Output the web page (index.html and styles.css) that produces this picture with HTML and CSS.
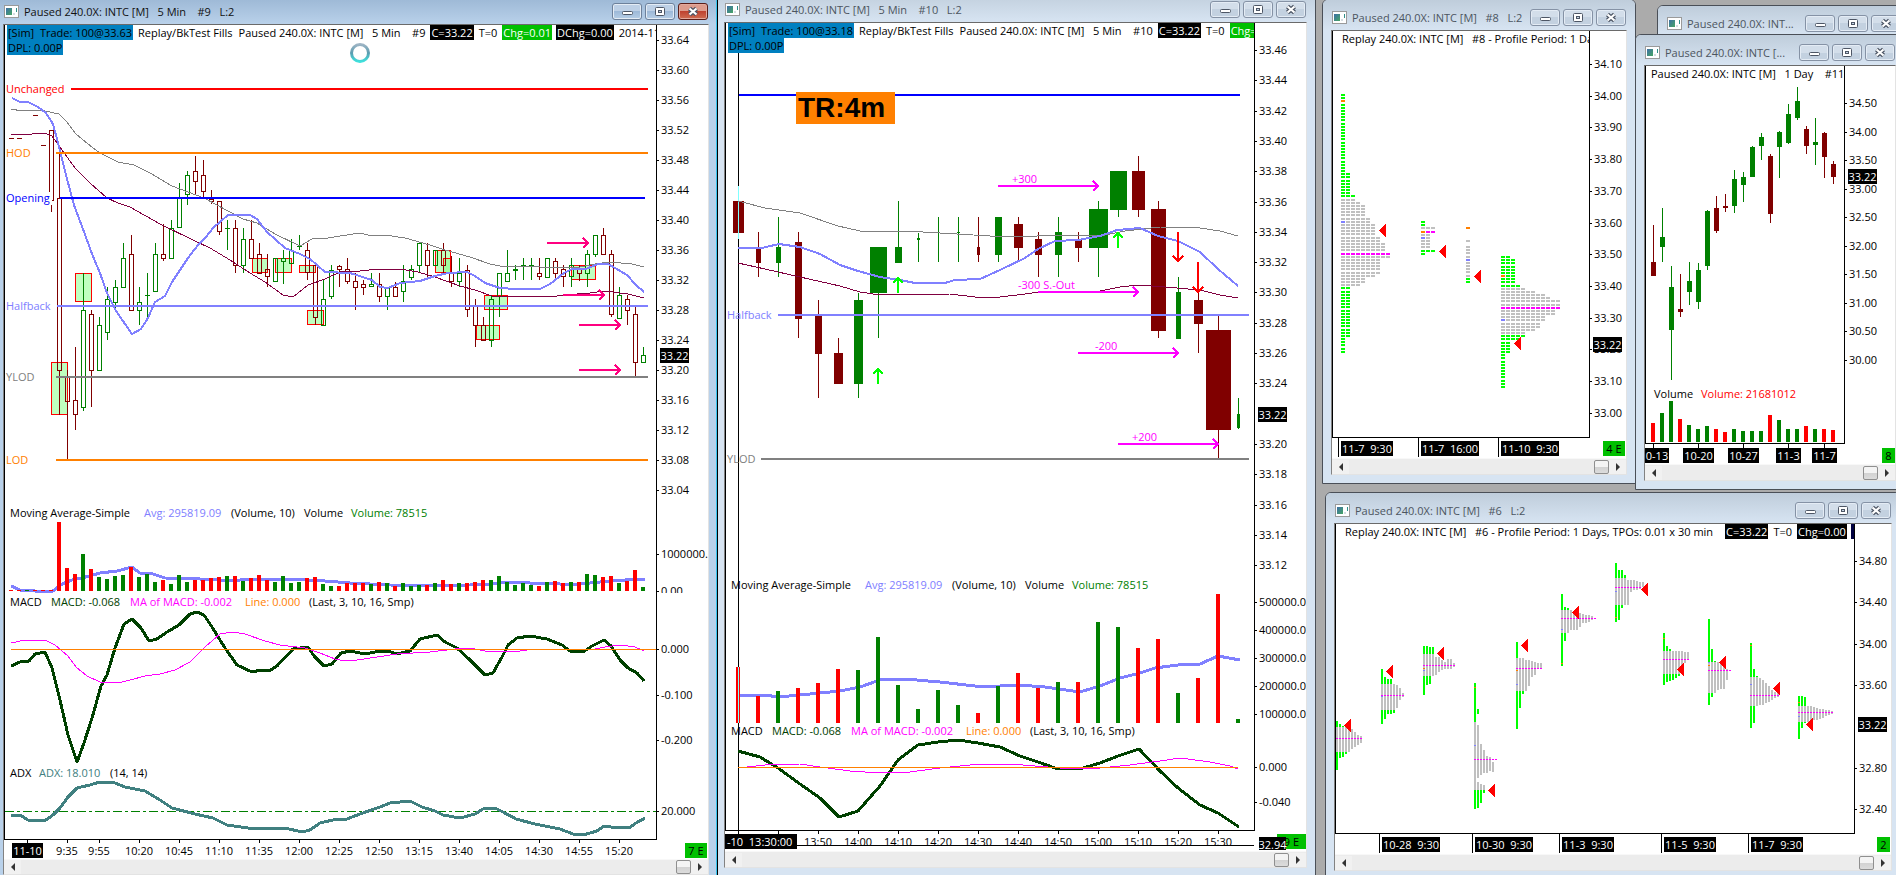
FILE: index.html
```html
<!DOCTYPE html>
<html lang="en">
<head>
<meta charset="utf-8">
<title>INTC replay workspace</title>
<link rel="stylesheet" href="styles.css">
</head>
<body>
<svg class="defs" aria-hidden="true">
  <defs>
    <linearGradient id="ring" x1="0" y1="0" x2="0" y2="1"><stop offset="0" stop-color="#9db4c4"/><stop offset=".5" stop-color="#5a9cb0"/><stop offset="1" stop-color="#3fe0dc"/></linearGradient>
    <linearGradient id="pane" x1="0" y1="0" x2="1" y2="1"><stop offset="0" stop-color="#3d6fa8"/><stop offset="1" stop-color="#46a563"/></linearGradient>
    <symbol id="app" viewBox="0 0 15 13"><rect x=".5" y=".5" width="14" height="12" fill="#fff" stroke="#9a9a9a"/><rect x="2" y="3" width="6" height="7" fill="url(#pane)"/><rect x="9" y="8" width="2" height="2" fill="#d5dde2"/><rect x="12" y="3" width="1" height="4" fill="#2f8f8a"/></symbol>
    <symbol id="min" viewBox="0 0 30 17"><rect x="10.500" y="8.500" width="10" height="3" rx="1" fill="#fff" stroke="#4d5665"/></symbol>
    <symbol id="max" viewBox="0 0 30 17"><rect x="10.500" y="4.500" width="9" height="8" rx="1" fill="#fff" stroke="#4d5665"/><rect x="13.500" y="7.500" width="3" height="2" fill="#c5d3e4" stroke="#4d5665"/></symbol>
    <symbol id="close" viewBox="0 0 30 17"><path d="M11.500 5.500L18.500 11.500M18.500 5.500L11.500 11.500" stroke="#4d5665" stroke-width="4.500"/><path d="M11.500 5.500L18.500 11.500M18.500 5.500L11.500 11.500" stroke="#fff" stroke-width="2.200"/></symbol>
  </defs>
</svg>
<main class="desktop">

  <section class="window w12">
    <header class="titlebar"><svg class="icon"><use href="#app"/></svg><h2>Paused 240.0X: INT...</h2><div class="controls"><button aria-label="Minimize"><svg><use href="#min"/></svg></button><button aria-label="Maximize"><svg><use href="#max"/></svg></button><button aria-label="Close"><svg><use href="#close"/></svg></button></div></header>
    <div class="content"></div>
  </section>

  <section class="window w8">
    <header class="titlebar"><svg class="icon"><use href="#app"/></svg><h2>Paused 240.0X: INTC [M]   #8   L:2</h2><div class="controls"><button aria-label="Minimize"><svg><use href="#min"/></svg></button><button aria-label="Maximize"><svg><use href="#max"/></svg></button><button aria-label="Close"><svg><use href="#close"/></svg></button></div></header>
    <div class="content">
      <div class="chart"><svg id="c8"></svg><div class="info inset-m"><p><span>Replay 240.0X: INTC [M]   #8 - Profile Period: 1 Days</span></p></div></div>
      <div class="scrollbar"><button class="arrow left" aria-label="Scroll left"></button><i class="thumb"></i><button class="arrow right" aria-label="Scroll right"></button></div>
    </div>
  </section>

  <section class="window w11">
    <header class="titlebar"><svg class="icon"><use href="#app"/></svg><h2>Paused 240.0X: INTC [...</h2><div class="controls"><button aria-label="Minimize"><svg><use href="#min"/></svg></button><button aria-label="Maximize"><svg><use href="#max"/></svg></button><button aria-label="Close"><svg><use href="#close"/></svg></button></div></header>
    <div class="content">
      <div class="chart"><svg id="c11"></svg><div class="info inset-s"><p><span>Paused 240.0X: INTC [M]   1 Day    #11</span></p></div></div>
      <div class="scrollbar"><button class="arrow left" aria-label="Scroll left"></button><i class="thumb"></i><button class="arrow right" aria-label="Scroll right"></button></div>
    </div>
  </section>

  <section class="window w6">
    <header class="titlebar"><svg class="icon"><use href="#app"/></svg><h2>Paused 240.0X: INTC [M]   #6   L:2</h2><div class="controls"><button aria-label="Minimize"><svg><use href="#min"/></svg></button><button aria-label="Maximize"><svg><use href="#max"/></svg></button><button aria-label="Close"><svg><use href="#close"/></svg></button></div></header>
    <div class="content">
      <div class="chart"><svg id="c6"></svg><div class="info inset-m"><p><span class="lead">Replay 240.0X: INTC [M]   #6 - Profile Period: 1 Days, TPOs: 0.01 x 30 min</span><b class="last">C=33.22</b><span>T=0</span><b class="last">Chg=0.00</b><b class="navy"></b></p></div></div>
      <div class="scrollbar"><button class="arrow left" aria-label="Scroll left"></button><i class="thumb"></i><button class="arrow right" aria-label="Scroll right"></button></div>
    </div>
  </section>

  <section class="window w10">
    <header class="titlebar"><svg class="icon"><use href="#app"/></svg><h2>Paused 240.0X: INTC [M]   5 Min    #10   L:2</h2><div class="controls"><button aria-label="Minimize"><svg><use href="#min"/></svg></button><button aria-label="Maximize"><svg><use href="#max"/></svg></button><button aria-label="Close"><svg><use href="#close"/></svg></button></div></header>
    <div class="content">
      <div class="chart"><svg id="c10"></svg><div class="info"><p><b class="sim">[Sim]  Trade: 100@33.18</b><span>Replay/BkTest Fills</span><span>Paused 240.0X: INTC [M]   5 Min    #10</span><b class="last">C=33.22</b><span>T=0</span><b class="up">Chg=0.01</b></p><p><b class="sim">DPL: 0.00P</b></p></div></div>
      <div class="scrollbar"><button class="arrow left" aria-label="Scroll left"></button><i class="thumb"></i><button class="arrow right" aria-label="Scroll right"></button></div>
    </div>
  </section>

  <section class="window w9 active">
    <header class="titlebar"><svg class="icon"><use href="#app"/></svg><h2>Paused 240.0X: INTC [M]   5 Min    #9   L:2</h2><div class="controls"><button aria-label="Minimize"><svg><use href="#min"/></svg></button><button aria-label="Maximize"><svg><use href="#max"/></svg></button><button class="danger" aria-label="Close"><svg><use href="#close"/></svg></button></div></header>
    <div class="content">
      <div class="chart"><svg id="c9"></svg><div class="info"><p><b class="sim">[Sim]  Trade: 100@33.63</b><span>Replay/BkTest Fills</span><span>Paused 240.0X: INTC [M]   5 Min    #9</span><b class="last">C=33.22</b><span>T=0</span><b class="up">Chg=0.01</b><b class="last">DChg=0.00</b><span>2014-11-10</span></p><p><b class="sim">DPL: 0.00P</b></p></div></div>
      <div class="scrollbar"><button class="arrow left" aria-label="Scroll left"></button><i class="thumb"></i><button class="arrow right" aria-label="Scroll right"></button></div>
    </div>
  </section>

</main>
<script src="charts.js"></script>
</body>
</html>
```

FILE: styles.css
```css
* { box-sizing: border-box; }
body { margin: 0; font-family: "Open Sans", "Noto Sans", sans-serif; font-size: 11px; color: #000; }
.defs { position: absolute; width: 0; height: 0; }
.desktop { position: relative; height: 100vh; overflow: hidden; background: #ababab; }

.window { position: absolute; display: flex; flex-direction: column; padding: 0 8px 8px; border: 1px solid #4a4f57; border-radius: 6px 6px 0 0; background: #d7e4f2; }
.w9 { left: -6px; top: -7px; bottom: -9px; width: 724px; }
.w10 { left: 715px; top: -9px; bottom: -2px; width: 601px; }
.w8 { left: 1322px; top: -1px; width: 314px; height: 485px; }
.w11 { left: 1635px; top: 34px; width: 270px; height: 456px; }
.w12 { left: 1657px; top: 5px; width: 254px; height: 300px; }
.w6 { left: 1325px; top: 492px; width: 576px; height: 388px; }
.window.active { background: #b9d1ea; border-color: #000; box-shadow: inset -1px 0 #36c4ee; }

.titlebar { display: flex; align-items: center; gap: 5px; height: 30px; flex: none; padding-top: 5px; margin: 0 -8px; padding-left: 9px; padding-right: 9px; border-radius: 5px 5px 0 0; background: linear-gradient(#bfcddb, #d7e4f2); }
.active .titlebar { background: linear-gradient(#98b4d2, #b9d1ea); margin-right: -7px; padding-right: 8px; }
.titlebar h2 { flex: 1; margin: 0; font-size: 11px; font-weight: 400; white-space: pre; overflow: hidden; color: #4c5560; }
.active h2 { color: #111; }
.icon { width: 15px; height: 13px; flex: none; }
.controls { display: flex; gap: 3px; flex: none; }
.controls button { width: 30px; height: 17px; padding: 0; border: 1px solid #8592a5; border-radius: 3px; background: linear-gradient(#d3deea 50%, #c3d1e0 50%); box-shadow: inset 0 0 0 1px #e4ecf5; }
.controls svg { display: block; width: 30px; height: 17px; margin: -1px; }
.active .controls button { background: linear-gradient(#bdd0e6 50%, #9db9d8 50%, #b6cee6); border-color: #6d819b; }
.active .controls .danger { background: linear-gradient(#dd9c8d 50%, #bf4330 50%, #cf6d52); border-color: #5a1d18; box-shadow: inset 0 0 0 1px #e3a99c; }

.content { flex: 1; min-height: 0; display: flex; flex-direction: column; border: 1px solid #e3e3e3; border-top-color: #6a6a6a; border-left-color: #828282; background: #fff; }
.chart { position: relative; flex: 1; min-height: 0; overflow: hidden; }
.chart > svg { display: block; width: 100%; height: 100%; }
.chart text { font-family: inherit; font-size: 11px; white-space: pre; }

.info { position: absolute; top: 0; left: 3px; right: 52px; overflow: hidden; }
.info.inset-m { left: 9px; right: 37px; }
.info.inset-s { left: 5px; right: 51px; }
.info p { display: flex; gap: 4px; margin: 0; height: 15px; line-height: 15px; white-space: pre; }
.info span, .info b { flex: none; padding: 0 1px; font-weight: 400; }
.info .lead { padding-right: 8px; }
.info .sim { background: #0080c0; }
.info .last { background: #000; color: #fff; }
.info .up { background: #00c000; color: #fff; }
.info .navy { background: #000040; width: 9px; }

.scrollbar { display: flex; align-items: center; flex: none; height: 16px; padding: 1px 0; background: #ececec; border-top: 1px solid #f8f8f8; }
.w9 .scrollbar { height: 15px; }
.thumb { width: 15px; height: 14px; margin-left: auto; border: 1px solid #8f8f8f; border-radius: 2px; background: linear-gradient(#f4f4f4 50%, #d2d2d2 50%, #dcdcdc); }
.arrow { width: 17px; height: 14px; padding: 0; border: 0; background: #f1f1f1; display: flex; align-items: center; justify-content: center; }
.arrow::before { content: ""; border: 4px solid transparent; }
.arrow.left::before { border-right-color: #333; border-left-width: 0; }
.arrow.right::before { border-left-color: #333; border-right-width: 0; }
```

FILE: charts.js
```js
const NS = 'http://www.w3.org/2000/svg';
const RED = '#800000', GREEN = '#008000', BLUE = '#8080ff', GRAY = '#808080', PLUM = '#800040';
const ORANGE = '#ff8000', MAGENTA = '#ff00ff', FOREST = '#004000', TEAL = '#408080', LIME = '#00ff00';
const hue = { r: RED, g: GREEN };
const volHue = { r: '#ff0000', g: GREEN };

// Drawing helpers bound to one chart; (ox, oy) is the chart's origin on the workspace.
function chart(id, ox, oy) {
  const g = document.createElementNS(NS, 'g');
  g.setAttribute('transform', `translate(${-ox} ${-oy})`);
  document.getElementById(id).append(g);
  const add = (tag, attrs) => {
    const el = document.createElementNS(NS, tag);
    for (const k in attrs) el.setAttribute(k, attrs[k]);
    g.append(el);
    return el;
  };
  const crisp = { 'shape-rendering': 'crispEdges' };
  const c = {
    add,
    rect: (x, y, w, h, fill) => add('rect', { x, y, width: w, height: h, fill, ...crisp }),
    h: (x1, x2, y, color, w = 1) => c.rect(x1, y, x2 - x1, w, color),
    v: (x, y1, y2, color, w = 1) => c.rect(x, y1, w, y2 - y1, color),
    poly: (points, stroke, w = 1) => add('polyline', { points, stroke, 'stroke-width': w, fill: 'none', 'stroke-linejoin': 'round', ...crisp }),
    text: (x, y, s, fill = '#000', anchor = 'start') => { add('text', { x, y, fill, 'text-anchor': anchor }).textContent = s; },
    tag: (x, y, w, s, bg = '#000', fg = '#fff', h = 15) => { c.rect(x, y, w, h, bg); c.text(x + w / 2, y + 12, s, fg, 'middle'); },
    axis: (x, labels) => labels.forEach(([y, s]) => { c.h(x, x + 3, y, '#000'); c.text(x + 5, y + 4, s); }),
    arrow: (x1, x2, y, color) => add('path', { d: `M${x1} ${y}H${x2}M${x2 - 5} ${y - 5}L${x2} ${y}L${x2 - 5} ${y + 5}`, stroke: color, 'stroke-width': 2, fill: 'none', ...crisp }),
    vArrow: (x, tail, tip, color) => { const d = tip < tail ? 5 : -5; add('path', { d: `M${x} ${tail}V${tip}M${x - 5} ${tip + d}L${x} ${tip}L${x + 5} ${tip + d}`, stroke: color, 'stroke-width': 2, fill: 'none', ...crisp }); },
    flag: (x, y) => add('path', { d: `M${x} ${y + .5}L${x + 7} ${y - 6.5}V${y + 7.5}Z`, fill: '#ff0000', ...crisp })
  };
  return c;
}

const parse = s => s.trim().split(/\s+/).map(t => [t[0], ...t.slice(1).split(',').map(Number)]);

/* #9, five-minute chart */
{
  const c = chart('c9', 4, 25);
  c.v(4, 25, 840, '#000');
  [[51, 362, 17, 53], [75, 273, 17, 29], [252, 258, 16, 15], [275, 258, 17, 15], [299, 265, 17, 8], [307, 310, 17, 15],
   [435, 250, 16, 23], [443, 258, 8, 15], [571, 265, 25, 15], [484, 295, 24, 15], [476, 325, 24, 15]].forEach(([x, y, w, h]) =>
    c.add('rect', { x: x + .5, y: y + .5, width: w - 1, height: h - 1, fill: 'rgba(128,255,128,.5)', stroke: '#ff0000', 'shape-rendering': 'crispEdges' }));

  // side + high, body top, body bottom, low
  const bars = parse(`r130,130,200,212 r153,198,370,415 r370,377,401,459 r347,400,414,430 g273,310,407,411 r310,314,370,407 g317,325,370,370
    g287,299,332,340 g280,287,302,308 g243,258,287,287 r235,254,310,310 g287,302,310,325 g273,295,295,317 g243,254,291,291
    r224,254,258,261 g220,228,258,258 g183,198,227,227 g171,175,194,205 r156,171,181,195 r160,175,191,197 r190,199,201,204
    r201,201,231,235 g220,228,228,250 r220,228,265,273 g228,239,265,273 r220,239,258,258 r243,254,273,273 r254,269,276,287
    g258,258,281,281 g250,258,261,284 g239,250,263,263 g235,246,246,250 r243,250,272,280 r265,265,317,325 g280,299,325,325
    g265,270,296,299 r265,266,269,287 r258,269,281,284 r273,281,287,310 r280,284,287,295 g273,284,286,286 r273,284,296,302
    g288,288,296,310 r282,287,296,296 g265,281,291,302 g265,269,277,280 g243,243,265,273 r243,250,265,280 g250,250,265,265
    r243,250,265,273 r256,273,281,287 g258,273,281,287 r265,270,309,317 r299,306,325,347 r317,325,340,340 g295,299,340,347
    g273,273,296,317 g250,273,281,281 g265,269,270,280 g258,265,265,280 g258,265,265,280 r258,273,276,280 g258,258,277,277
    r258,261,273,281 r265,269,276,287 g258,265,276,287 r265,269,273,281 g250,254,273,287 g235,235,254,257 r228,235,254,251
    r250,254,314,317 g287,295,318,318 r295,299,310,325 r307,314,362,376 g347,355,362,362`);
  bars.forEach(([k, hi, top, bot, lo], n) => {
    const x = 51 + n * 8, col = hue[k];
    c.v(x, hi, top, col);
    if (lo > bot) c.v(x, bot, lo, col);
    if (bot - top < 2) c.h(x - 2, x + 3, top, col, bot - top + 1);
    else c.add('rect', { x: x - 1.5, y: top + .5, width: 4, height: bot - top, fill: 'none', stroke: col, 'shape-rendering': 'crispEdges' });
  });
  [[9, 138], [17, 138], [33, 115], [41, 145]].forEach(([x, y]) => c.h(x, x + 5, y, RED));

  c.poly('11,109 22,111 32,110 45,111 59,114 66,121 76,134 88,144 100,153 118,162 134,165 150,173 172,186 188,192 204,198 228,211 243,219 257,223 275,234 300,246 312,239 328,238 340,236 360,233 372,236 385,235 405,238 430,245 445,250 470,257 490,264 500,266 530,266 540,267 580,267 595,264 610,262 632,264 644,267', GRAY);
  c.poly('11,134 20,135 45,133 52,136 62,150 75,168 90,183 107,198 118,203 130,207 160,224 195,241 210,248 230,260 250,273 265,282 283,295 293,297 308,285 325,279 340,272 360,271 378,269 400,269 418,272 435,277 460,286 475,290 492,296 520,296 550,297 565,295 590,293 605,291 628,294 636,296 644,298', PLUM);
  c.poly('12,98 20,102 28,102 38,107 46,113 53,124 58,143 66,175 74,205 83,229 92,254 100,273 107,293 116,311 132,334 141,329 148,318 155,302 165,296 172,282 188,258 198,245 206,237 213,228 228,215 250,215 257,219 267,232 285,248 300,254 310,259 325,272 350,273 372,280 380,287 388,288 400,283 420,281 435,276 448,273 467,272 475,276 485,283 500,288 515,289 540,289 550,284 564,273 572,269 586,269 598,264 608,264 615,268 627,275 636,285 644,292', BLUE, 2);

  c.rect(5, 192, 47, 13, '#fff');
  [[89, 71, '#ff0000', 'Unchanged', 648], [153, 56, ORANGE, 'HOD', 648], [198, 60, '#0000ff', 'Opening', 645], [306, 57, BLUE, 'Halfback', 648], [377, 56, GRAY, 'YLOD', 648], [460, 56, ORANGE, 'LOD', 648]].forEach(([y, x, col, s, end]) => {
    c.h(x, end, y - 1, col, 2);
    c.text(6, y + 4, s, col);
  });
  [[547, 588, 243], [563, 604, 295], [579, 620, 325], [579, 620, 370]].forEach(([a, b, y]) => c.arrow(a, b, y, '#ff0080'));

  // volume study
  c.poly('11,586 20,590 35,591 53,591 60,585 72,580 90,576 100,573 117,571 132,567 140,573 150,573 165,578 200,579 220,580 240,580 256,579 290,579 305,580 325,581 350,583 390,585 430,586 470,585 490,584 508,582 530,583 560,584 580,584 600,582 625,580 637,579 645,580', BLUE, 3);
  const vols = 'r69 r23 r17 g37 r22 g14 g12 g15 g16 r24 g14 g17 g9 r11 g7 g16 g9 r11 r11 r13 r14 g15 r15 g10 r13 r16 r11 g9 g15 g8 g9 r13 r14 g7 g5 r5 r8 r8 r8 g7 r9 g8 r5 g8 g5 g6 r6 g8 r11 r7 g8 r8 r9 r11 g11 g15 g9 g6 g8 g6 r5 g9 r10 r8 g9 r9 g17 g16 r14 r15 g8 r10 r21 g4';
  parse(vols).forEach(([k, h], i) => c.rect(57 + i * 8, 591 - h, 4, h, volHue[k]));
  [9, 17, 25, 33, 41, 49].forEach((x, i) => c.h(x, x + 4, 590, i === 2 ? GREEN : '#ff0000'));

  // MACD study
  c.poly('11,666 20,662 29,661 35,654 45,652 52,668 60,700 68,735 77,762 84,743 92,718 101,686 107,675 115,648 124,624 132,619 141,628 149,641 157,639 167,632 179,625 190,614 197,612 204,615 212,627 225,648 237,665 252,672 261,670 269,671 277,666 293,649 308,647 314,656 324,666 332,664 341,653 350,651 365,654 375,652 388,651 397,654 410,651 420,639 437,635 445,642 457,648 470,660 485,675 493,673 502,657 508,645 517,638 530,636 547,639 562,645 570,651 583,652 592,646 604,640 611,646 620,660 628,668 637,673 644,681', FOREST, 3);
  c.poly('11,643 25,640 45,640 55,645 68,656 76,667 87,676 100,682 118,683 130,680 145,676 160,674 175,670 190,662 205,647 220,634 233,632 245,634 265,641 280,645 305,648 320,653 335,659 345,661 357,660 397,654 430,652 455,649 470,648 485,651 500,652 520,651 535,649 560,649 580,650 595,649 605,647 620,645 635,647 644,651', MAGENTA);
  c.h(11, 657, 649, ORANGE);

  // ADX study
  c.add('line', { x1: 5, x2: 656, y1: 811.5, y2: 811.5, stroke: '#008000', 'stroke-dasharray': '9 3 3 3', 'shape-rendering': 'crispEdges' });
  c.poly('11,815 20,815 28,820 38,821 46,820 53,815 60,808 68,797 77,788 90,785 100,782 115,783 125,787 145,791 160,800 172,808 195,814 213,818 227,825 255,829 285,828 302,832 310,830 320,823 333,820 347,819 360,814 380,807 390,803 410,801 422,807 435,811 443,815 460,818 475,814 483,809 495,808 503,812 516,819 535,824 560,829 573,834 583,835 597,831 604,826 611,827 629,828 636,823 645,818', TEAL, 3);

  [[10, 'Moving Average-Simple', '#000'], [144, 'Avg: 295819.09', BLUE], [231, '(Volume, 10)', '#000'], [304, 'Volume', '#000'], [351, 'Volume: 78515', GREEN]].forEach(([x, s, f]) => c.text(x, 517, s, f));
  [[10, 'MACD', '#000'], [51, 'MACD: -0.068', FOREST], [130, 'MA of MACD: -0.002', MAGENTA], [245, 'Line: 0.000', ORANGE], [309, '(Last, 3, 10, 16, Smp)', '#000']].forEach(([x, s, f]) => c.text(x, 606, s, f));
  [[10, 'ADX', '#000'], [39, 'ADX: 18.010', TEAL], [110, '(14, 14)', '#000']].forEach(([x, s, f]) => c.text(x, 777, s, f));

  c.v(656, 25, 840, '#000');
  c.h(4, 657, 839, '#000');
  c.axis(656, Array.from({ length: 16 }, (_, i) => [40 + i * 30, (33.64 - i * .04).toFixed(2)]));
  c.axis(656, [[554, '1000000.0'], [591, '0.00'], [649, '0.000'], [695, '-0.100'], [740, '-0.200'], [811, '20.000']]);
  c.rect(660, 593, 48, 5, '#fff');
  c.tag(660, 348, 29, '33.22');
  'x 9:35 9:55 10:20 10:45 11:10 11:35 12:00 12:25 12:50 13:15 13:40 14:05 14:30 14:55 15:20'.split(' ').forEach((s, i) => {
    const x = i === 0 ? 27 : i === 1 ? 67 : 99 + (i - 2) * 40;
    c.v(x, 840, 843, '#000');
    if (i) c.text(x, 855, s, '#000', 'middle');
  });
  c.tag(12, 843, 31, '11-10');
  c.tag(685, 843, 22, '7 E', '#00c000', '#000');
  c.add('circle', { cx: 360, cy: 53, r: 8.5, fill: 'none', stroke: 'url(#ring)', 'stroke-width': 3 });
}

/* #10, five-minute close-up */
{
  const c = chart('c10', 725, 23);
  c.v(725, 23, 831, '#000');
  c.h(738, 1240, 94, '#0000ff', 2);
  c.h(761, 1249, 458, GRAY, 2);
  c.v(738, 23, 835, '#000');
  // side + body width, high, top, bottom, low
  parse(`r11,201,201,233,233 r5,232,247,263,277 g5,217,247,263,277 r7,232,242,319,338 r7,300,315,354,398 r9,338,353,384,384 g9,293,300,384,398
    g17,247,247,293,338 g7,201,247,263,263 g3,233,238,240,262 g1,217,217,262,262 g3,217,232,233,262 r3,217,247,255,262 g7,217,217,255,262
    r9,217,224,248,260 r7,232,239,255,277 g7,217,232,255,277 r7,232,240,248,262 g19,201,209,248,277 g17,171,171,210,217 r13,156,171,210,217
    r15,201,209,331,338 g5,277,292,339,339 r9,292,300,324,353 r25,316,330,430,458 g3,398,414,428,429`).forEach(([k, w, hi, top, bot, lo], i) => {
    const x = 738 + i * 20;
    c.v(x, hi, lo, hue[k]);
    c.rect(x - (w - 1) / 2, top, w, bot - top, hue[k]);
  });
  c.h(778, 1249, 314, BLUE, 2);
  c.v(738, 186, 239, '#80ffff');
  c.poly('738,201 765,208 800,213 838,226 860,231 880,232 905,231 940,233 990,236 1020,237 1055,235 1105,235 1125,231 1160,227 1200,228 1220,231 1238,236', GRAY);
  c.poly('738,263 765,269 800,277 840,286 860,292 880,295 950,294 975,297 1000,297 1025,294 1040,292 1100,291 1120,287 1138,285 1165,287 1200,290 1220,295 1238,298', PLUM);
  c.poly('738,248 762,248 779,244 800,247 820,254 840,265 858,271 880,277 900,280 915,283 945,283 955,280 980,279 1000,270 1025,258 1038,249 1055,241 1078,240 1100,236 1117,230 1140,228 1158,236 1178,241 1200,252 1218,269 1238,286', BLUE, 2);
  c.text(727, 319, 'Halfback', BLUE);
  c.text(727, 463, 'YLOD', GRAY);

  [[998, 186, 1012, '+300'], [1038, 292, 1018, '-300 S.-Out'], [1078, 353, 1095, '-200'], [1118, 444, 1132, '+200']].forEach(([x, y, tx, s]) => {
    c.arrow(x, x + 100, y, MAGENTA);
    c.text(tx, y - 3, s, MAGENTA);
  });
  c.vArrow(878, 384, 369, LIME);
  c.vArrow(898, 293, 278, LIME);
  c.vArrow(1118, 248, 233, LIME);
  c.vArrow(1178, 232, 261, '#ff0000');
  c.vArrow(1198, 262, 292, '#ff0000');
  c.rect(796, 92, 99, 32, ORANGE);
  const tr = c.add('text', { x: 798, y: 117, style: 'font:bold 28px "Liberation Sans",Arial,sans-serif' });
  tr.textContent = 'TR:4m';

  c.poly('738,695 765,695 778,697 800,695 840,691 860,687 880,680 905,679 940,682 975,686 1000,686 1018,685 1045,687 1080,692 1100,686 1120,678 1140,673 1155,668 1178,665 1200,664 1218,656 1240,660', BLUE, 3);
  parse('r56 r27 g32 r35 r40 r54 g53 g86 g38 g14 g33 g18 r10 g37 r50 r35 g41 r41 g101 g96 r75 r84 g30 r45 r129 g4').forEach(([k, h], i) => c.rect(736 + i * 20, 723 - h, 4, h, volHue[k]));
  c.v(738, 667, 723, '#80ffff');
  c.poly('738,751 760,757 778,768 800,784 820,798 839,817 858,811 880,786 898,760 918,745 938,742 958,740 978,743 1000,747 1020,756 1038,762 1055,768 1080,769 1100,763 1118,756 1139,749 1160,771 1178,788 1200,805 1218,813 1239,827', FOREST, 3);
  c.poly('738,768 765,765 800,764 820,767 850,771 880,773 910,772 940,768 980,764 1010,764 1060,768 1100,768 1130,765 1160,761 1180,758 1210,762 1230,766 1238,769', MAGENTA);
  c.h(738, 1238, 767, ORANGE);
  [[731, 'Moving Average-Simple', '#000'], [865, 'Avg: 295819.09', BLUE], [952, '(Volume, 10)', '#000'], [1025, 'Volume', '#000'], [1072, 'Volume: 78515', GREEN]].forEach(([x, s, f]) => c.text(x, 589, s, f));
  [[731, 'MACD', '#000'], [772, 'MACD: -0.068', FOREST], [851, 'MA of MACD: -0.002', MAGENTA], [966, 'Line: 0.000', ORANGE], [1030, '(Last, 3, 10, 16, Smp)', '#000']].forEach(([x, s, f]) => c.text(x, 735, s, f));

  c.v(1254, 23, 831, '#000');
  c.h(725, 1255, 830, '#000');
  c.axis(1254, Array.from({ length: 18 }, (_, i) => [Math.round(50 + i * 30.3), (33.46 - i * .02).toFixed(2)]).filter(l => l[1] !== '33.22'));
  c.axis(1254, [[602, '500000.00'], [630, '400000.00'], [658, '300000.00'], [686, '200000.00'], [714, '100000.00'], [767, '0.000'], [802, '-0.040']]);
  c.tag(1258, 407, 29, '33.22');
  c.v(778, 831, 834, '#000');
  c.rect(725, 834, 72, 15, '#000');
  c.text(727, 846, '-10  13:30:00', '#fff');
  '13:50 14:00 14:10 14:20 14:30 14:40 14:50 15:00 15:10 15:20 15:30'.split(' ').forEach((s, i) => {
    c.v(818 + i * 40, 831, 834, '#000');
    c.text(818 + i * 40, 846, s, '#000', 'middle');
  });
  c.h(797, 1254, 845, '#000');
  c.rect(797, 846, 457, 6, '#fff');
  c.tag(1277, 834, 29, '9 E', '#00c000', '#000');
  c.tag(1259, 837, 27, '32.94', '#000', '#fff', 13);
}

/* #8, market profile */
{
  const c = chart('c8', 1332, 31);
  c.v(1332, 31, 438, '#000');
  c.v(1589, 31, 438, '#000');
  c.h(1332, 1590, 437, '#000');
  c.axis(1589, Array.from({ length: 12 }, (_, i) => [Math.round(64 + i * 31.7), (34.1 - i * .1).toFixed(2)]));
  const tint = { g: LIME, y: '#c0c0c0', m: MAGENTA, o: ORANGE, b: BLUE };
  // each run is colour + columns x rows; a second colour letter tints the first column
  const profile = (x, y, runs) => {
    let k = 0;
    runs.split(' ').forEach(run => {
      const [, color, first, n, rows] = run.match(/^([a-z])([a-z]?)(\d+)x(\d+)$/);
      for (let r = 0; r < +rows; r++, k++)
        for (let i = 0; i < +n; i++)
          c.rect(x + i * 5, Math.round(y + k * 3.17), 4, 2, tint[i === 0 && first ? first : color]);
    });
  };
  profile(1341, 94, 'g1x2 o1x1 g1x22 g2x7 g3x1 y3x1 y4x1 y5x4 y6x1 yb6x1 y7x4 y8x2 y9x3 m10x1 y10x1 y8x5 y7x1 y5x2 y4x1 g2x16 g1x5');
  profile(1421, 221, 'g1x2 y3x1 mo3x1 y2x1 yb2x1 y2x3 g3x1 g1x1');
  profile(1466, 227, 'o1x1 y0x3 y1x1 y0x1 y1x4 b1x1 y1x5 g1x2');
  profile(1501, 256, 'g2x1 g3x5 go3x1 g3x2 g4x1 y5x1 y7x1 y9x1 y10x1 y12x2 m12x1 y11x2 y9x1 yb9x1 y8x2 y7x1 y5x1 g5x1 g4x1 g2x4 g1x11');
  [[1379, 230], [1439, 251], [1474, 276], [1514, 343]].forEach(p => c.flag(...p));
  c.tag(1593, 337, 29, '33.22');
  [[1338, 52, '11-7  9:30'], [1418, 58, '11-7  16:00'], [1498, 58, '11-10  9:30']].forEach(([x, w, s]) => { c.v(x, 438, 457, '#000'); c.tag(x + 3, 441, w, s); });
  c.tag(1603, 441, 22, '4 E', '#00c000', '#000');
}

/* #11, daily chart */
{
  const c = chart('c11', 1645, 66);
  c.v(1645, 66, 444, '#000');
  parse(`r225,262,276,276 g208,237,247,262 g266,287,330,380 r274,309,312,317 g262,281,292,305 g263,270,302,309 g210,211,266,270
    r196,208,231,233 r194,206,208,212 g170,179,206,213 g172,177,185,202 g146,147,177,177 g133,137,146,160 r154,156,214,223
    g131,132,147,178 g104,114,143,144 g87,101,118,120 r126,129,146,154 g118,142,145,165 r132,133,157,178 r161,164,177,184`).forEach(([k, hi, top, bot, lo], i) => {
    c.v(1653 + i * 9, hi, lo, hue[k]);
    c.rect(1651 + i * 9, top, 5, bot - top, hue[k]);
  });
  parse('r19 g29 g41 r23 g17 g13 g16 r13 r10 g13 g11 g11 g11 r27 g22 g13 g13 r16 g13 r13 r12').forEach(([k, h], i) => c.rect(1651 + i * 9, 442 - h, 4, h, volHue[k]));
  c.text(1654, 398, 'Volume');
  c.text(1701, 398, 'Volume: 21681012', '#ff0000');
  c.v(1844, 66, 444, '#000');
  c.h(1645, 1845, 443, '#000');
  c.axis(1844, [103, 132, 160, 189, 217, 246, 274, 303, 331, 360].map((y, i) => [y, (34.5 - i * .5).toFixed(2)]));
  c.tag(1848, 169, 29, '33.22');
  [[1645, 24, '0-13', 1653], [1683, 31, '10-20', 1698], [1728, 31, '10-27', 1743], [1776, 25, '11-3', 1788], [1812, 25, '11-7', 1824]].forEach(([x, w, s, t]) => { c.v(t, 444, 449, '#000'); c.tag(x, 448, w, s); });
  c.tag(1882, 448, 13, '8', '#00c000', '#000');
}

/* #6, daily profiles */
{
  const c = chart('c6', 1335, 524);
  c.v(1335, 524, 834, '#000');
  // cols are [top, bottom]; split holds [index, top, bottom] for broken columns; va is the value area
  [
    { x: 1336, va: [727, 752], poc: 738, w: 26, cols: [[721, 770], [724, 758], [726, 757], [727, 754], [728, 752], [729, 749], [732, 747], [735, 745], [736, 743]] },
    { x: 1381, va: [684, 710], poc: 695, w: 23, cols: [[669, 724], [677, 719], [679, 714], [679, 714], [684, 713], [685, 708], [688, 700], [693, 697]] },
    { x: 1423, va: [654, 676], poc: 665, w: 32, cols: [[646, 695], [646, 685], [647, 684], [647, 676], [657, 675], [657, 672], [660, 670], [662, 669], [659, 669], [659, 669], [663, 667]] },
    { x: 1474, va: [722, 790], poc: 759, w: 23, cols: [[683, 809], [725, 778], [744, 775], [750, 773], [756, 773], [757, 771], [762, 772]], split: [[1, 709, 714], [1, 782, 808], [2, 784, 803], [3, 785, 793]] },
    { x: 1516, va: [658, 691], poc: 668, w: 26, cols: [[642, 729], [658, 708], [658, 694], [660, 691], [660, 686], [661, 677], [662, 675], [663, 669], [663, 669]] },
    { x: 1561, va: [610, 633], poc: 618, w: 35, cols: [[594, 666], [607, 641], [608, 633], [610, 630], [613, 630], [614, 630], [613, 627], [614, 623], [615, 623], [615, 622], [616, 620]] },
    { x: 1615, va: [578, 605], poc: 587, w: 26, cols: [[563, 622], [570, 620], [570, 608], [575, 605], [580, 605], [580, 592], [580, 590], [581, 590], [582, 589], [582, 587]] },
    { x: 1663, va: [651, 674], poc: 659, w: 26, cols: [[633, 685], [646, 682], [649, 681], [651, 680], [651, 678], [651, 676], [651, 674], [652, 663], [652, 660]] },
    { x: 1708, va: [662, 693], poc: 670, w: 23, cols: [[619, 705], [649, 697], [661, 693], [662, 690], [663, 689], [667, 689], [669, 680]] },
    { x: 1750, va: [677, 706], poc: 695, w: 29, cols: [[643, 728], [669, 723], [676, 706], [678, 705], [680, 705], [683, 703], [686, 702], [690, 700], [692, 698], [693, 697]] },
    { x: 1798, va: [706, 722], poc: 712, w: 35, cols: [[696, 739], [696, 728], [697, 723], [706, 722], [706, 720], [707, 720], [708, 720], [709, 719], [709, 718], [710, 716], [710, 715], [711, 714]] }
  ].forEach(p => {
    const [a, b] = p.va;
    [...p.cols.map((q, i) => [i, ...q]), ...(p.split || [])].forEach(([i, t, e]) => {
      const x = p.x + i * 3;
      c.rect(x, t, 2, e - t, LIME);
      const t2 = Math.max(t, a), e2 = Math.min(e, b);
      if (e2 > t2) c.rect(x, t2, 2, e2 - t2, '#c0c0c0');
    });
    for (let x = p.x; x < p.x + p.w; x += 3) c.rect(x, p.poc, 2, 1, MAGENTA);
  });
  [[1381, 696, BLUE], [1423, 668, ORANGE], [1423, 670, BLUE], [1474, 745, BLUE], [1474, 687, ORANGE], [1516, 670, ORANGE], [1516, 684, BLUE], [1561, 629, BLUE], [1561, 663, ORANGE], [1615, 591, BLUE], [1615, 617, ORANGE], [1663, 638, ORANGE], [1708, 662, BLUE], [1708, 665, ORANGE], [1750, 645, ORANGE], [1750, 684, BLUE], [1798, 702, ORANGE], [1798, 716, BLUE]].forEach(([x, y, f]) => c.rect(x, y, 2, 1, f));
  [[1344, 725], [1386, 671], [1437, 653], [1488, 790], [1521, 645], [1572, 612], [1641, 589], [1677, 669], [1719, 662], [1773, 688], [1806, 724]].forEach(p => c.flag(...p));
  c.v(1854, 524, 834, '#000');
  c.h(1335, 1855, 833, '#000');
  c.axis(1854, [[561, '34.80'], [602, '34.40'], [644, '34.00'], [685, '33.60'], [768, '32.80'], [809, '32.40']]);
  c.tag(1858, 717, 29, '33.22');
  [[1379, 58, '10-28  9:30'], [1472, 58, '10-30  9:30'], [1559, 52, '11-3  9:30'], [1661, 52, '11-5  9:30'], [1748, 52, '11-7  9:30']].forEach(([x, w, s]) => { c.v(x, 834, 853, '#000'); c.tag(x + 3, 837, w, s); });
  c.tag(1877, 837, 13, '2', '#00c000', '#000');
}
```
